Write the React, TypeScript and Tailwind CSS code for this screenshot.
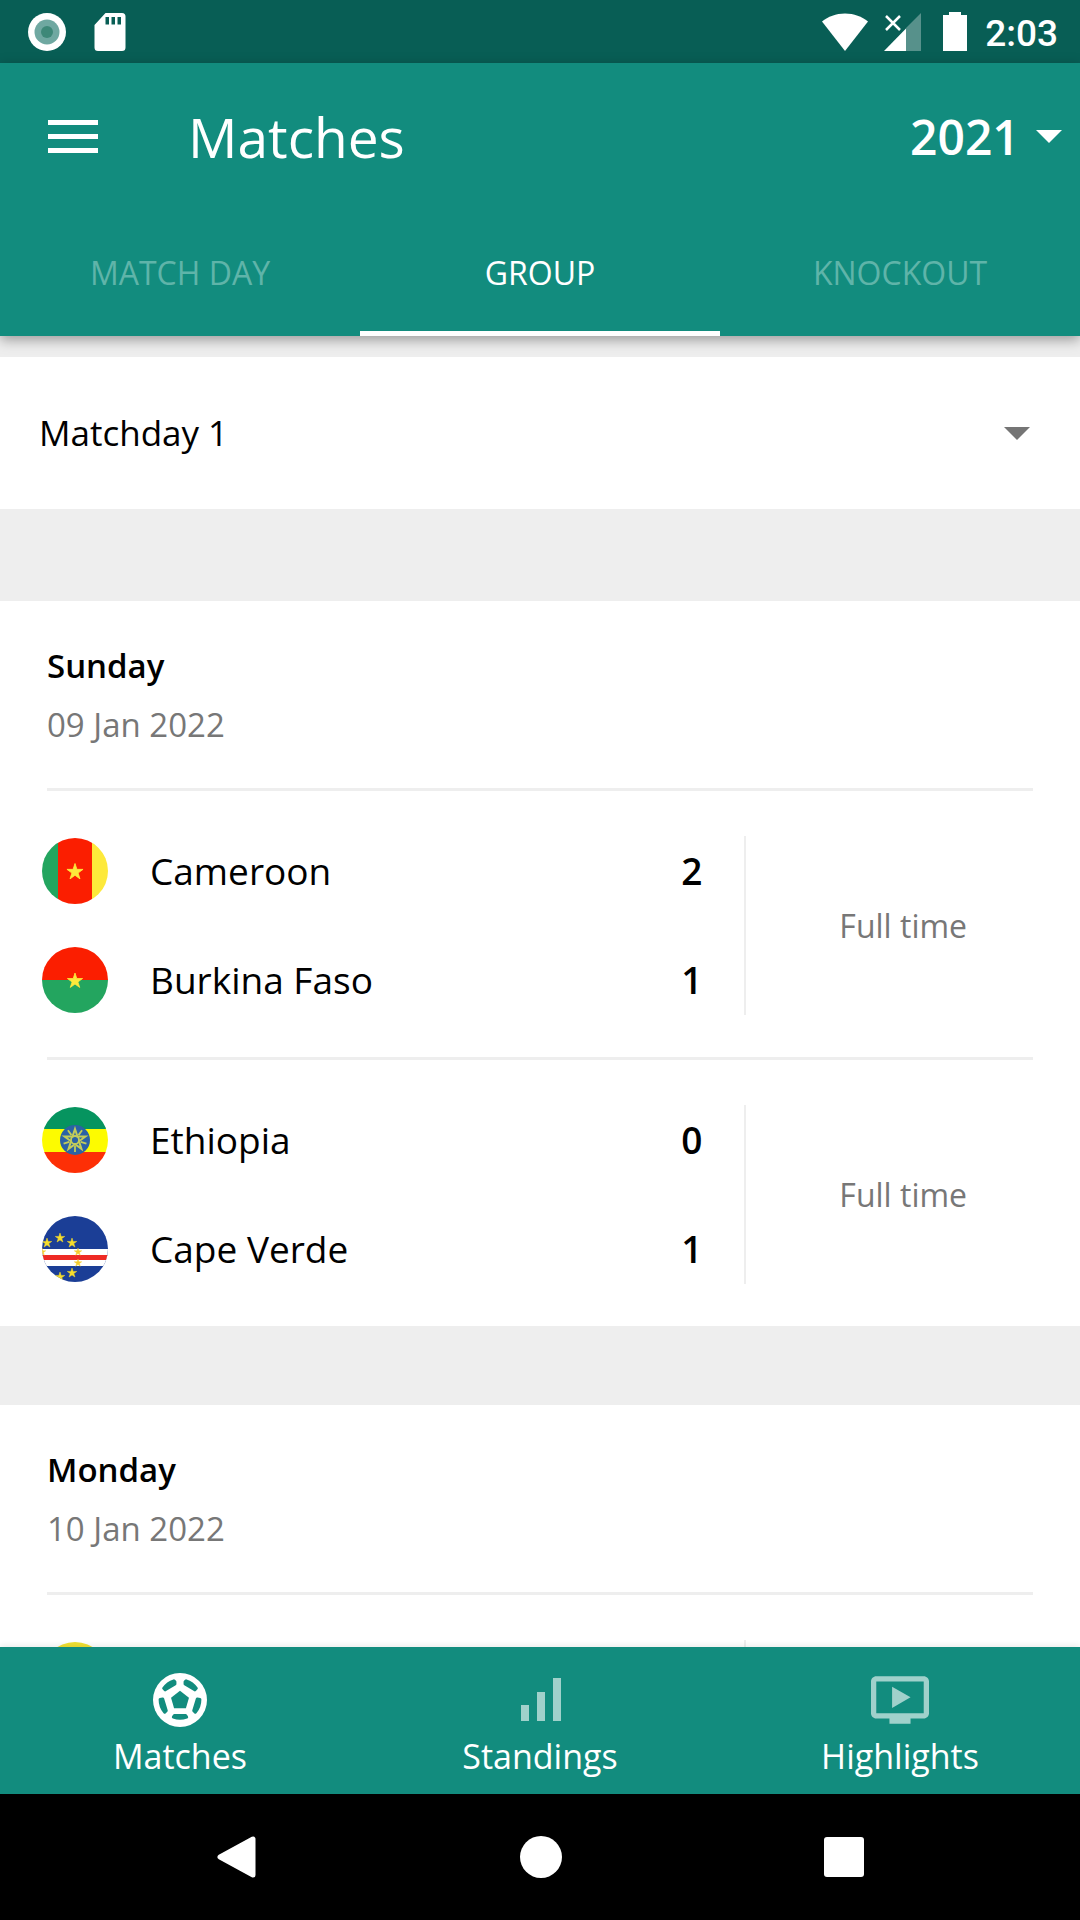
import { useState } from 'react';

type Team = { name: string; score: number; flag: React.ReactNode };
type Match = { home: Team; away: Team; status: string };
type Day = { day: string; date: string; matches: Match[] };

const STAR = '0,-10 2.25,-3.1 9.5,-3.1 3.64,1.18 5.88,8.09 0,3.82 -5.88,8.09 -3.64,1.18 -9.5,-3.1 -2.25,-3.1';

const Star = ({ x, y, size, fill }: { x: number; y: number; size: number; fill: string }) => (
	<polygon points={STAR} fill={fill} stroke={fill} transform={`translate(${x} ${y}) scale(${size / 10})`} />
);

const Flag = ({ id, children }: { id: string; children: React.ReactNode }) => (
	<svg viewBox="0 0 66 66" className="size-[66px] shrink-0" aria-hidden="true">
		<clipPath id={id}>
			<circle cx="33" cy="33" r="33" />
		</clipPath>
		<g clipPath={`url(#${id})`}>{children}</g>
	</svg>
);

const Cameroon = () => (
	<Flag id="cameroon">
		<rect width="16" height="66" fill="#23a55f" />
		<rect x="16" width="34" height="66" fill="#fb1e00" />
		<rect x="50" width="16" height="66" fill="#fde93b" />
		<Star x={33} y={34} size={8.5} fill="#fde93b" />
	</Flag>
);

const BurkinaFaso = () => (
	<Flag id="burkina">
		<rect width="66" height="33" fill="#fb1e00" />
		<rect y="33" width="66" height="33" fill="#23a55f" />
		<Star x={33} y={34} size={8} fill="#fde93b" />
	</Flag>
);

const RAYS = [36, 108, 180, 252, 324];

const Ethiopia = () => (
	<Flag id="ethiopia">
		<rect width="66" height="22" fill="#06945f" />
		<rect y="22" width="66" height="23" fill="#fdfb00" />
		<rect y="45" width="66" height="21" fill="#fd2f06" />
		<circle cx="33" cy="33" r="15" fill="#2b62a5" />
		<g transform="translate(33 33)" fill="none" stroke="#c3cc5a" strokeWidth="1.8">
			<polygon points={STAR} transform="scale(1.1)" />
			<circle r="4" />
			{RAYS.map((a) => (
				<path key={a} d="M0-6v-6" transform={`rotate(${a})`} />
			))}
		</g>
	</Flag>
);

const CapeVerde = () => (
	<Flag id="capeverde">
		<rect width="66" height="66" fill="#1b3e96" />
		<rect y="33" width="66" height="17" fill="#fff" />
		<rect y="39" width="66" height="5" fill="#ee2a24" />
		<Star x={5} y={27} size={5} fill="#f6dd2c" />
		<Star x={18} y={22} size={5} fill="#f6dd2c" />
		<Star x={30} y={27} size={5} fill="#f6dd2c" />
		<Star x={36} y={36} size={4} fill="#f6cd2c" />
		<Star x={36} y={47} size={4} fill="#f6cd2c" />
		<Star x={30} y={57} size={5} fill="#f6dd2c" />
		<Star x={18} y={61} size={5} fill="#f6dd2c" />
		<Star x={0} y={36} size={4} fill="#f6cd2c" />
	</Flag>
);

const Senegal = () => (
	<Flag id="senegal">
		<rect width="66" height="66" fill="#f0e032" />
	</Flag>
);

const Zimbabwe = () => (
	<Flag id="zimbabwe">
		<rect width="66" height="66" fill="#23a55f" />
	</Flag>
);

const days: Day[] = [
	{
		day: 'Sunday',
		date: '09 Jan 2022',
		matches: [
			{
				home: { name: 'Cameroon', score: 2, flag: <Cameroon /> },
				away: { name: 'Burkina Faso', score: 1, flag: <BurkinaFaso /> },
				status: 'Full time',
			},
			{
				home: { name: 'Ethiopia', score: 0, flag: <Ethiopia /> },
				away: { name: 'Cape Verde', score: 1, flag: <CapeVerde /> },
				status: 'Full time',
			},
		],
	},
	{
		day: 'Monday',
		date: '10 Jan 2022',
		matches: [
			{
				home: { name: 'Senegal', score: 1, flag: <Senegal /> },
				away: { name: 'Zimbabwe', score: 0, flag: <Zimbabwe /> },
				status: 'Full time',
			},
		],
	},
];

const Caret = ({ className }: { className: string }) => (
	<svg viewBox="0 0 26 13" className={className} aria-hidden="true">
		<path d="M0 0h26L13 13z" fill="currentColor" />
	</svg>
);

const StatusBar = () => (
	<div className="flex h-[63px] shrink-0 items-center justify-between bg-[#085e55] pr-[22px] pl-7 text-white">
		<div className="flex items-center gap-7">
			<svg viewBox="0 0 38 38" className="size-[38px]" aria-hidden="true">
				<circle cx="19" cy="19" r="19" fill="#fff" />
				<circle cx="19" cy="19" r="12.5" fill="#6fa8a1" />
				<circle cx="19" cy="19" r="6" fill="#3d8878" />
			</svg>
			<svg viewBox="0 0 32 38" className="h-[38px] w-8" aria-hidden="true">
				<path
					fillRule="evenodd"
					fill="#fff"
					d="M11.5 0H28a3.5 3.5 0 0 1 3.5 3.5v31A3.5 3.5 0 0 1 28 38H4a3.5 3.5 0 0 1-3.5-3.5V12zM11.5 4v7.5h3.5V4zM17.5 4v7.5h3.5V4zM23.5 4v7.5h3.5V4z"
				/>
			</svg>
		</div>
		<div className="flex items-center">
			<svg viewBox="0 0 46 38" className="h-[38px] w-[46px]" aria-hidden="true">
				<path d="M23 38 0 8.5C6 3.5 14 .5 23 .5s17 3 23 8z" fill="#fff" />
			</svg>
			<svg viewBox="0 0 38 38" className="ml-4 size-[38px]" aria-hidden="true">
				<path d="M37 0v38H22V15z" fill="#fff" fillOpacity=".32" />
				<path d="M0 38 22 15.5V38z" fill="#fff" />
				<path d="m2 3 14 14M16 3 2 17" stroke="#fff" strokeWidth="2.5" />
			</svg>
			<svg viewBox="0 0 24 39" className="ml-[21px] h-[39px] w-6" aria-hidden="true">
				<path d="M6 0h12v3h6v36H0V3h6z" fill="#fff" />
			</svg>
			<span className="ml-[18px] pt-1 font-[Roboto,sans-serif] text-[37px] leading-none font-medium">2:03</span>
		</div>
	</div>
);

const tabs = ['MATCH DAY', 'GROUP', 'KNOCKOUT'];

const Header = () => {
	const [active, setActive] = useState('GROUP');
	return (
		<header className="z-10 shrink-0 bg-[#128c7e] text-white shadow-[0_4px_12px_rgba(0,0,0,0.35)]">
			<div className="flex h-[147px] items-center pr-[18px] pl-12">
				<button type="button" aria-label="Open menu" className="flex w-[50px] flex-col gap-[9px]">
					<span className="h-[5px] w-full bg-white" />
					<span className="h-[5px] w-full bg-white" />
					<span className="h-[5px] w-full bg-white" />
				</button>
				<h1 className="ml-[90px] grow text-[55px] leading-[76px]">Matches</h1>
				<div className="flex items-center">
					<select aria-label="Season" className="mr-4 appearance-none text-[48px] leading-[72px] font-semibold">
						<option>2021</option>
					</select>
					<Caret className="h-[13px] w-[26px]" />
				</div>
			</div>
			<div role="tablist" className="grid h-[126px] grid-cols-3">
				{tabs.map((tab) => (
					<button
						key={tab}
						type="button"
						role="tab"
						aria-selected={tab === active}
						onClick={() => setActive(tab)}
						className={
							tab === active
								? 'border-b-[5px] border-white pt-[5px] text-[32px]'
								: 'border-b-[5px] border-transparent pt-[5px] text-[32px] text-[#5fb4a9]'
						}>
						{tab}
					</button>
				))}
			</div>
		</header>
	);
};

const TeamRow = ({ name, score, flag }: Team) => (
	<div className="flex h-[66px] items-center">
		{flag}
		<span className="ml-[42px] grow text-[37px] leading-[50px]">{name}</span>
		<span className="text-[37px] leading-[50px] font-semibold">{score}</span>
	</div>
);

const MatchRow = ({ match }: { match: Match }) => (
	<article className="flex pt-[45px] pr-5 pb-[42px] pl-[42px]">
		<div className="flex grow flex-col gap-[43px] py-0.5 pr-[42px]">
			<TeamRow {...match.home} />
			<TeamRow {...match.away} />
		</div>
		<div className="flex w-[31%] items-center justify-center border-l-2 border-[#eee] text-[32px] text-[#777]">
			{match.status}
		</div>
	</article>
);

const DayCard = ({ day }: { day: Day }) => (
	<section className="bg-white">
		<div className="px-[47px] pt-[42px] pb-10">
			<h2 className="text-[33px] leading-[46px] font-semibold">{day.day}</h2>
			<p className="mt-[13px] text-[33px] leading-[46px] text-[#777]">{day.date}</p>
		</div>
		{day.matches.map((match) => (
			<div key={match.home.name}>
				<hr className="mx-[47px] border-t-[3px] border-[#eee]" />
				<MatchRow match={match} />
			</div>
		))}
	</section>
);

const BallIcon = () => (
	<svg viewBox="0 0 53 53" className="size-[54px]" aria-hidden="true">
		<circle cx="26.5" cy="26.5" r="26.5" fill="#fff" />
		<path d="m26.5 17.5 8.8 6.7-3 10.4H20.7l-3-10.4z" fill="#128c7e" />
		<g fill="#128c7e" stroke="#128c7e" strokeWidth="3" strokeLinejoin="round">
			<path d="M12 16.500 10.500 15c2.500-3.500 6-6 10-7.300l1 1v2z" />
			<path d="m41 16.500 1.500-1.500c-2.500-3.500-6-6-10-7.300l-1 1v2z" />
			<path d="m7 26 2.500-.5 3.500 11.500-1.500 1.500C8.500 35 7 30.500 7 26z" />
			<path d="m46 26-2.500-.5L40 37l1.500 1.500C44.500 35 46 30.500 46 26z" />
			<path d="M21 41.700h11l1 1.600c-4.500 1.600-8.500 1.600-13 0z" />
		</g>
	</svg>
);

const BarsIcon = () => (
	<svg viewBox="-2 0 42 54" className="h-[54px] w-[42px] text-white/60" fill="currentColor" aria-hidden="true">
		<path d="M0 32h8v16H0zM16 19h8v29h-8zM32 5h8v43h-8z" />
	</svg>
);

const VideoIcon = () => (
	<svg viewBox="1 2 22 20" className="h-[54px] w-[58px] text-white/60" fill="currentColor" aria-hidden="true">
		<path d="M21 3H3c-1.110 0-2 .89-2 2v12c0 1.100.89 2 2 2h5v2h8v-2h5c1.100 0 2-.9 2-2V5c0-1.110-.9-2-2-2zm0 14H3V5h18v12zm-5-6l-7 4V7z" />
	</svg>
);

const BottomNav = () => (
	<nav className="z-10 grid h-[147px] shrink-0 grid-cols-3 bg-[#128c7e] text-[34px] leading-[44px] text-white shadow-[0_-2px_6px_rgba(0,0,0,0.08)]">
		<a href="#matches" aria-current="page" className="flex flex-col items-center gap-[7px] pt-[26px]">
			<BallIcon />
			Matches
		</a>
		<a href="#standings" className="flex flex-col items-center gap-[7px] pt-[26px]">
			<BarsIcon />
			Standings
		</a>
		<a href="#highlights" className="flex flex-col items-center gap-[7px] pt-[26px]">
			<VideoIcon />
			Highlights
		</a>
	</nav>
);

const SystemNav = () => (
	<div className="flex h-[126px] shrink-0 items-center justify-center gap-[262px] bg-black">
		<button type="button" aria-label="Back">
			<svg viewBox="0 0 42 42" className="size-[42px]" aria-hidden="true">
				<path d="M37 3v36L4 21z" fill="#fff" stroke="#fff" strokeWidth="5" strokeLinejoin="round" />
			</svg>
		</button>
		<button type="button" aria-label="Home" className="size-[42px] rounded-full bg-white" />
		<button type="button" aria-label="Recents" className="size-10 rounded-[3px] bg-white" />
	</div>
);

const App = () => {
	return (
		<div className="flex h-screen flex-col overflow-hidden bg-[#eee] font-['Open_Sans',sans-serif] text-black">
			<StatusBar />
			<Header />
			<main className="min-h-0 grow overflow-hidden pt-[21px]">
				<div className="flex h-[152px] items-center bg-white pr-[50px] pl-[39px]">
					<select aria-label="Matchday" className="grow appearance-none text-[35px] leading-[52px]">
						<option>Matchday 1</option>
					</select>
					<Caret className="h-[13px] w-[26px] text-[#757575]" />
				</div>
				<div className="mt-[92px] flex flex-col gap-[79px]">
					{days.map((day) => (
						<DayCard key={day.day} day={day} />
					))}
				</div>
			</main>
			<BottomNav />
			<SystemNav />
		</div>
	);
};

export default App;
